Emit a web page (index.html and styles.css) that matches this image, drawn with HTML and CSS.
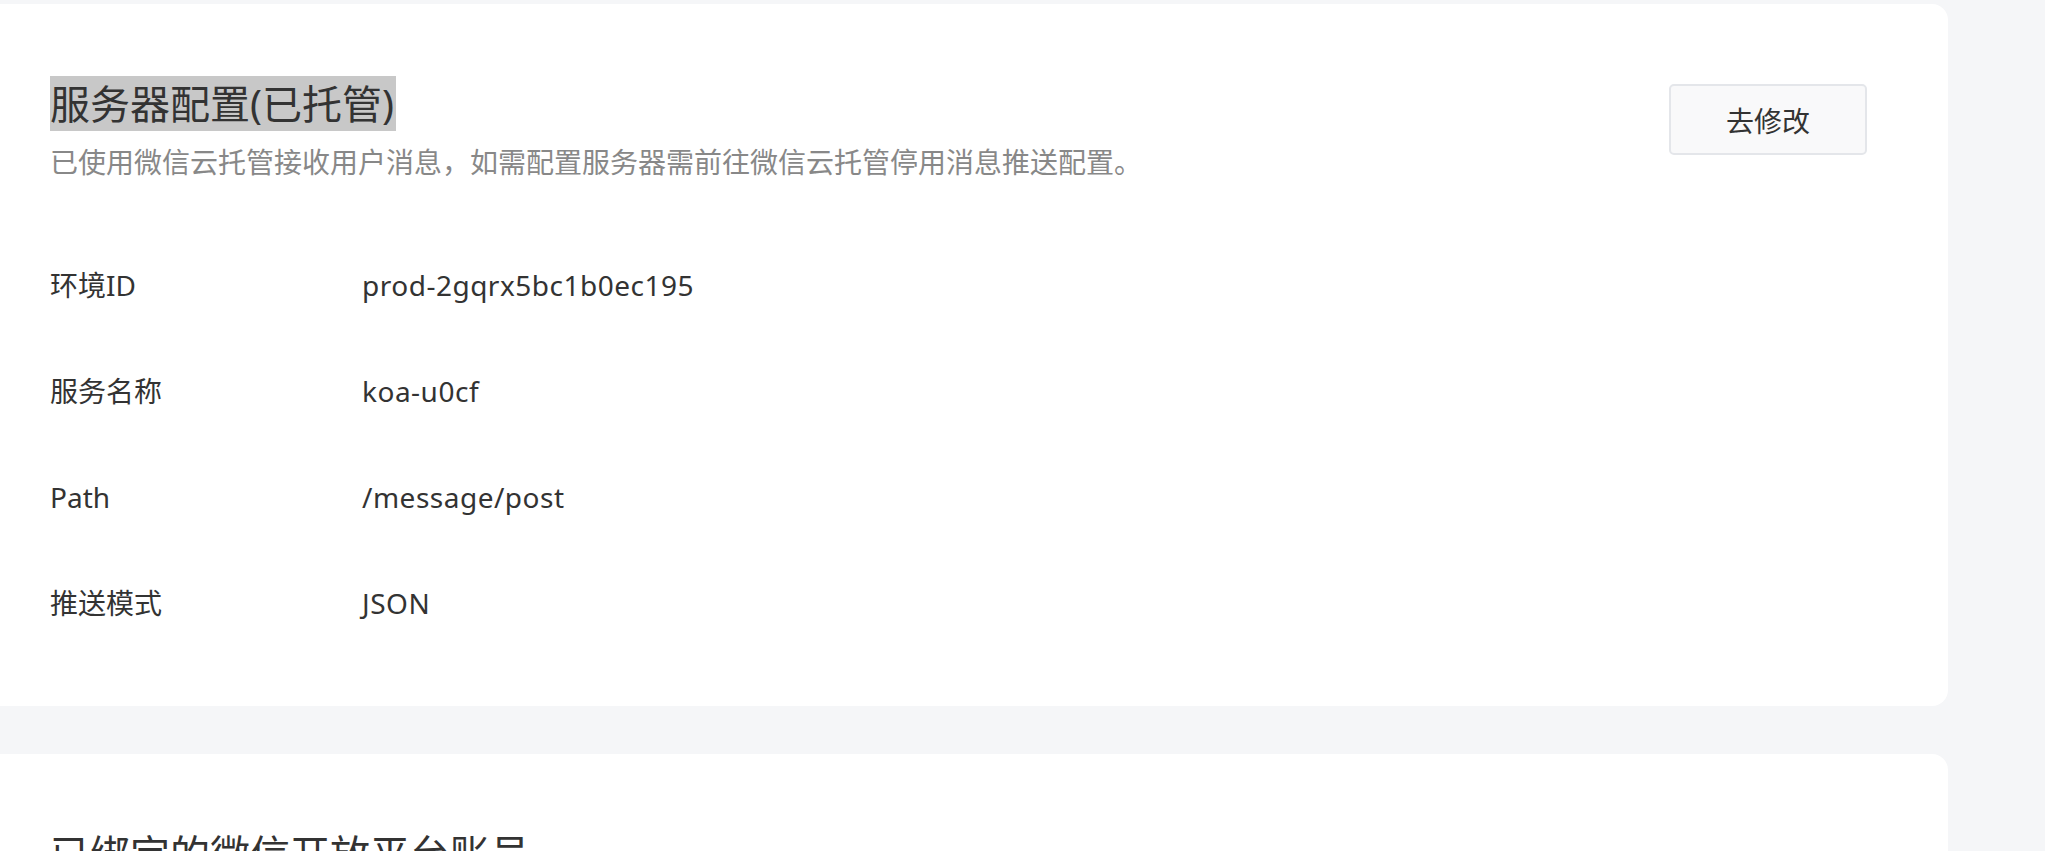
FILE: index.html
```html
<!DOCTYPE html>
<html lang="zh-CN">
<head>
<meta charset="utf-8">
<title>服务器配置</title>
<link rel="stylesheet" href="styles.css">
</head>
<body>
<main class="main">
  <section class="card">
    <div class="card-head">
      <div class="head-text">
        <h2 class="title"><span class="selected">服务器配置(已托管)</span></h2>
        <p class="desc">已使用微信云托管接收用户消息，如需配置服务器需前往微信云托管停用消息推送配置。</p>
      </div>
      <button class="btn">去修改</button>
    </div>
    <dl class="info">
      <div class="row"><dt>环境ID</dt><dd>prod-2gqrx5bc1b0ec195</dd></div>
      <div class="row"><dt>服务名称</dt><dd>koa-u0cf</dd></div>
      <div class="row"><dt>Path</dt><dd>/message/post</dd></div>
      <div class="row"><dt>推送模式</dt><dd>JSON</dd></div>
    </dl>
  </section>
  <section class="card card-tall">
    <div class="card-head">
      <div class="head-text">
        <h2 class="title">已绑定的微信开放平台账号</h2>
      </div>
    </div>
  </section>
</main>
</body>
</html>
```

FILE: styles.css
```css
html {
  overflow: hidden;
}
body {
  margin: 0;
  background: #f5f6f8;
  font-family: "Noto Sans", "Noto Sans CJK SC", sans-serif;
  color: #333;
}
.main {
  width: 1968px;
  margin-left: -20px;
  padding-top: 4px;
  display: flex;
  flex-direction: column;
  gap: 48px;
}
.card {
  background: #fff;
  border-radius: 16px;
  padding: 74px 81px 50px 70px;
}
.card-tall {
  min-height: 400px;
}
.card-head {
  display: flex;
  justify-content: space-between;
  align-items: flex-start;
}
.title {
  margin: 0;
  font-size: 40px;
  line-height: 51px;
  font-weight: 400;
  color: #333;
}
.selected {
  background: #c8c8c8;
  padding-right: 2px;
}
.desc {
  margin: 13px 0 0;
  font-size: 28px;
  line-height: 40px;
  color: #888;
}
.btn {
  margin-top: 6px;
  width: 198px;
  height: 71px;
  border: 2px solid #e4e6ea;
  border-radius: 5px;
  background: #f9f9fa;
  font-family: inherit;
  font-size: 28px;
  color: #333;
  padding: 0;
}
.info {
  margin: 50px 0 0;
}
.row {
  display: flex;
  align-items: center;
  height: 106px;
  font-size: 28px;
  line-height: 40px;
}
.row dt {
  width: 312px;
  flex-shrink: 0;
  color: #333;
}
.row dd {
  margin: 0;
  color: #333;
  letter-spacing: 0.5px;
}
```
